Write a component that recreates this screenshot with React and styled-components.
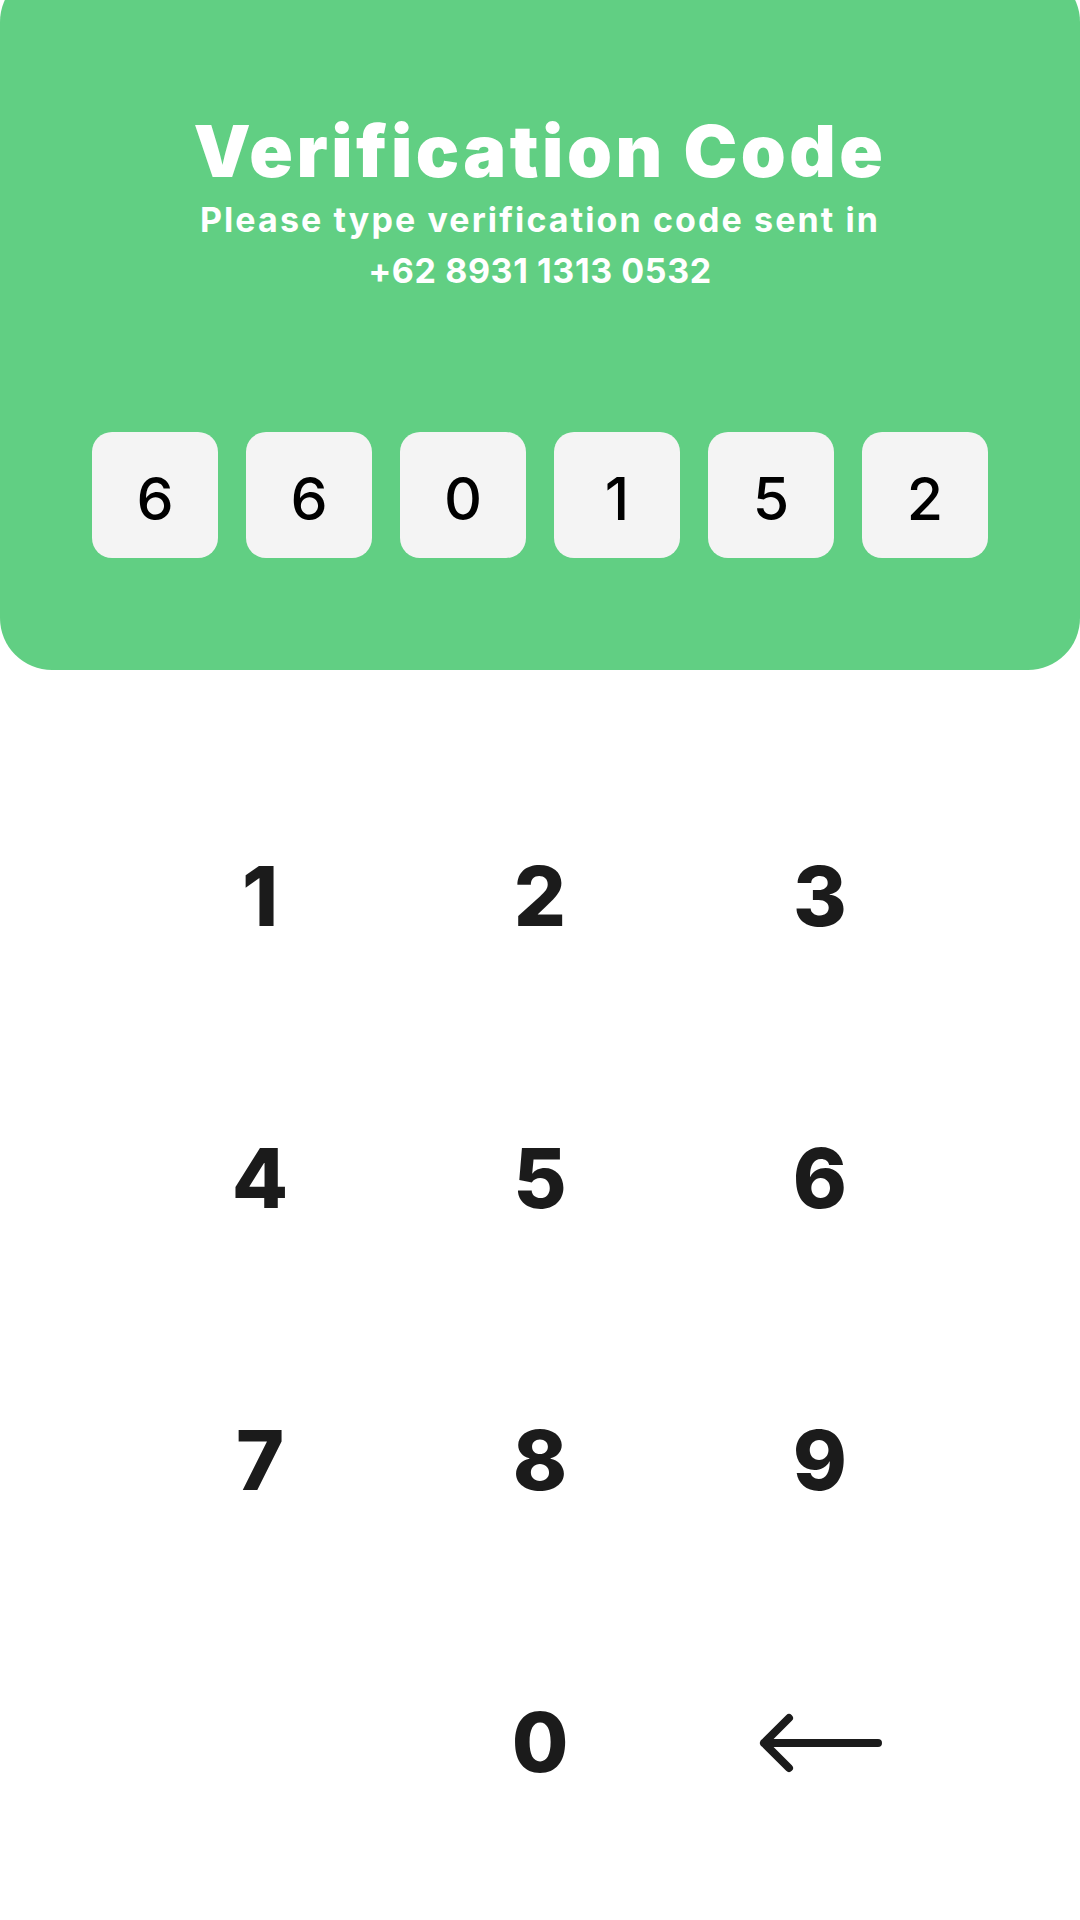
import React from "react";
import styled, { createGlobalStyle } from "styled-components";

const GlobalStyle = createGlobalStyle`
  body {
    margin: 0;
    background: #fff;
    font-family: Inter, "Liberation Sans", sans-serif;
  }
`;

const code = ["6", "6", "0", "1", "5", "2"];
const keys = ["1", "2", "3", "4", "5", "6", "7", "8", "9", "", "0", "back"];

const App = () => {
  return (
    <Page>
      <GlobalStyle />
      <Header>
        <Title>Verification Code</Title>
        <Subtitle>
          <SubLine $spacing="2.1px">Please type verification code sent in</SubLine>
          <SubLine $spacing="0.6px">+62 8931 1313 0532</SubLine>
        </Subtitle>
        <CodeRow>
          {code.map((d, i) => (
            <CodeBox key={i}>{d}</CodeBox>
          ))}
        </CodeRow>
      </Header>
      <Keypad>
        {keys.map((k, i) => (
          <Key key={i}>
            {k === "back" ? (
              <svg width="130" height="70" viewBox="0 0 130 70">
                <path
                  d="M9 35 H123 M34 10 L9 35 L34 60"
                  fill="none"
                  stroke="#1b1b1b"
                  strokeWidth="8"
                  strokeLinecap="round"
                  strokeLinejoin="round"
                />
              </svg>
            ) : (
              k
            )}
          </Key>
        ))}
      </Keypad>
    </Page>
  );
};
export default App;

const Page = styled.div`
  width: 1080px;
  min-height: 1920px;
  overflow: hidden;
`;
const Header = styled.div`
  margin-top: -30px;
  height: 700px;
  box-sizing: border-box;
  padding-top: 145px;
  background-color: #61cf83;
  border-radius: 52px;
  display: flex;
  flex-direction: column;
  align-items: center;
  color: #fff;
`;
const Title = styled.div`
  font-size: 72px;
  line-height: 72px;
  font-weight: 900;
  letter-spacing: 3.5px;
`;
const Subtitle = styled.div`
  margin-top: 7px;
  display: flex;
  flex-direction: column;
  align-items: center;
`;
const SubLine = styled.div`
  font-size: 34px;
  line-height: 51px;
  font-weight: 700;
  letter-spacing: ${(p) => p.$spacing};
`;
const CodeRow = styled.div`
  margin-top: 136px;
  display: flex;
  gap: 28px;
`;
const CodeBox = styled.div`
  width: 126px;
  height: 126px;
  box-sizing: border-box;
  padding-top: 6px;
  border-radius: 20px;
  background-color: #f4f4f4;
  color: #000;
  display: flex;
  align-items: center;
  justify-content: center;
  font-size: 59px;
  line-height: 1;
  font-weight: 500;
`;
const Keypad = styled.div`
  margin: 86px auto 0;
  width: 840px;
  display: grid;
  grid-template-columns: repeat(3, 280px);
  grid-auto-rows: 282px;
`;
const Key = styled.div`
  display: flex;
  align-items: center;
  justify-content: center;
  font-size: 82px;
  line-height: 1;
  font-weight: 800;
  color: #1b1b1b;
`;
